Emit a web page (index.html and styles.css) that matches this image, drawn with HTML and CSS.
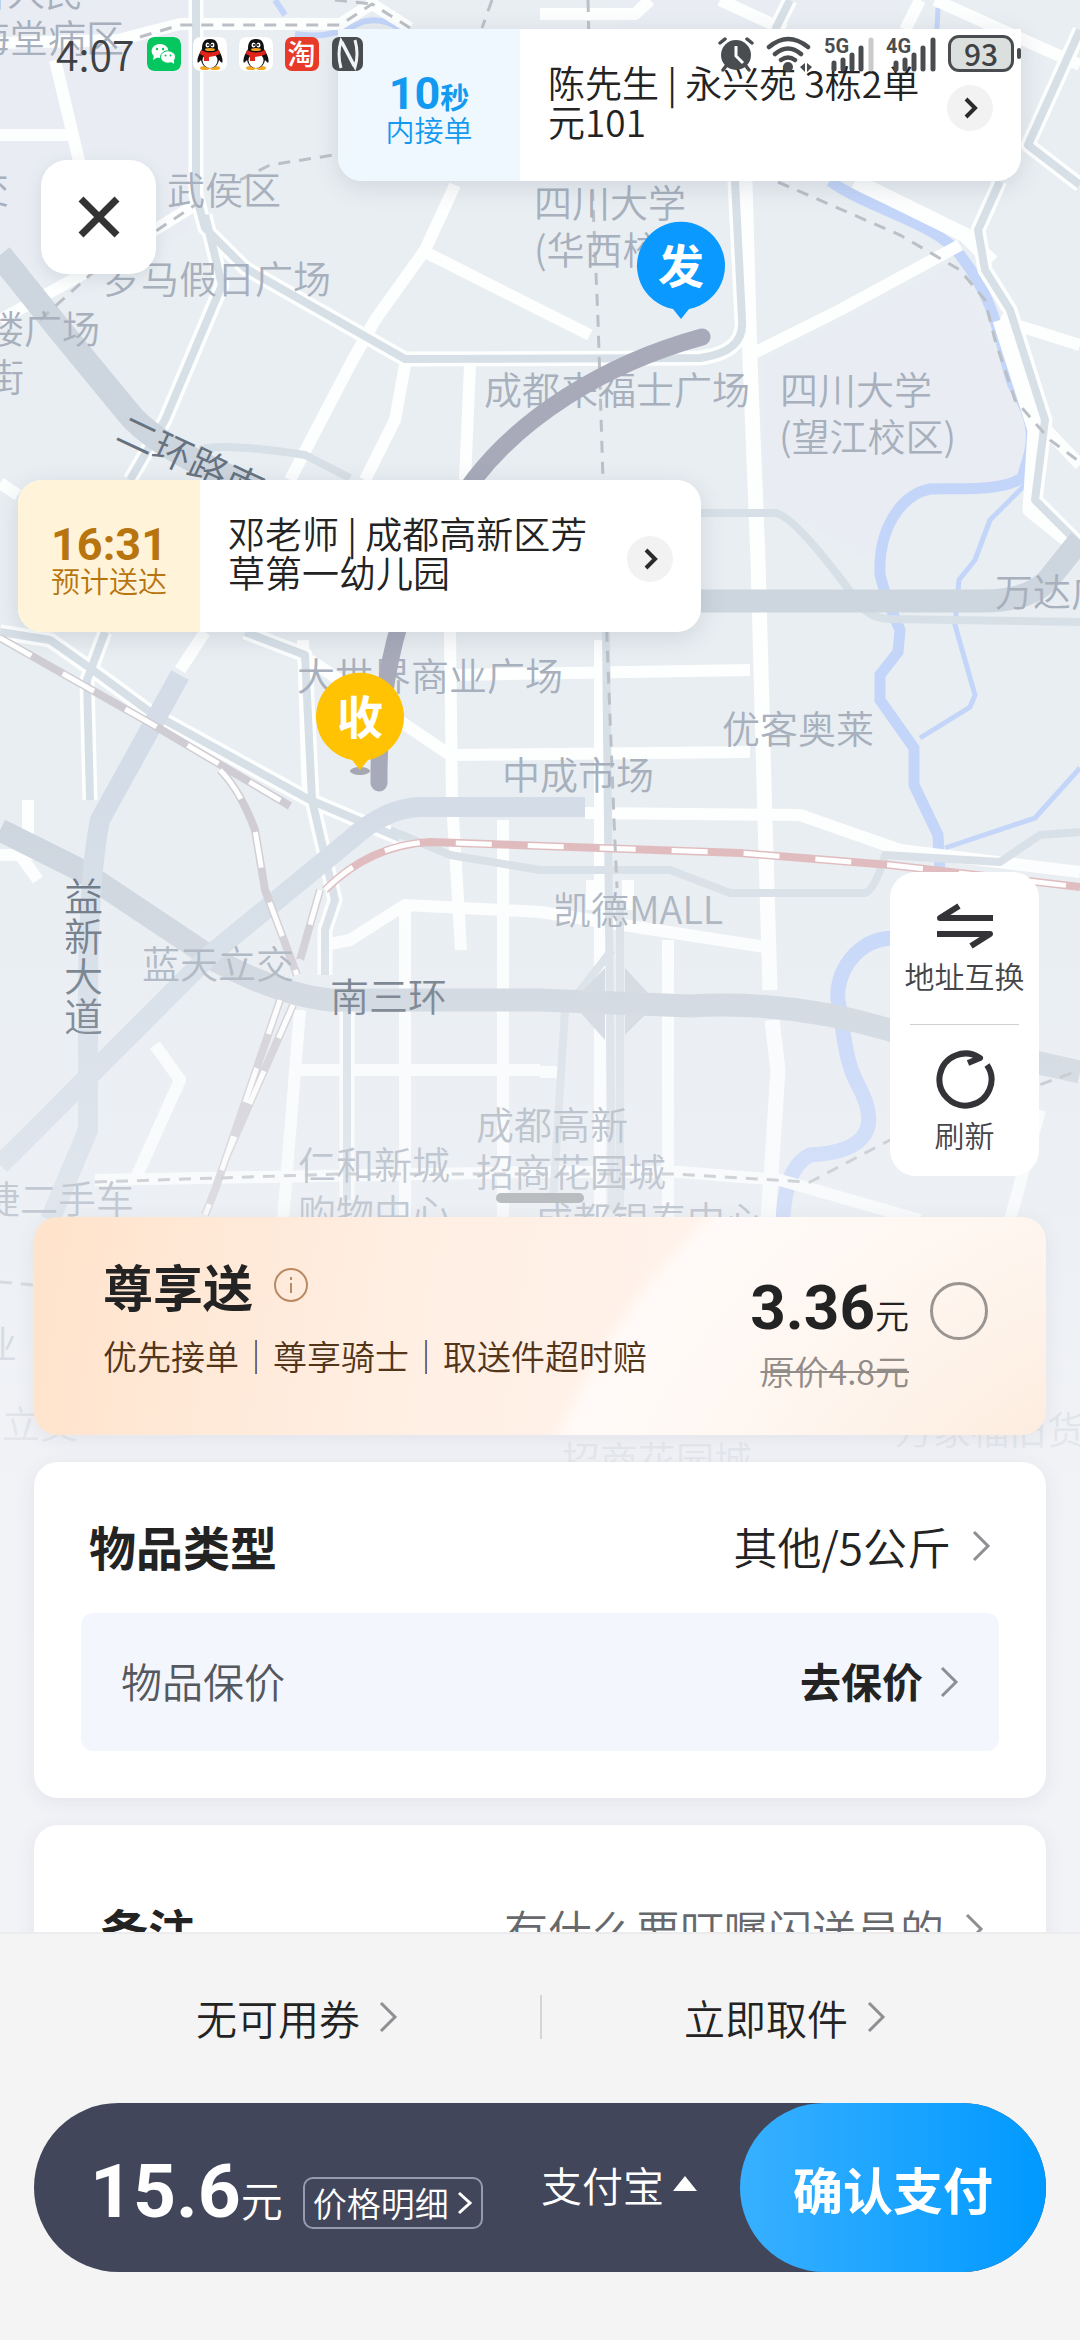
FILE: index.html
```html
<!DOCTYPE html>
<html lang="zh-CN">
<head>
  <meta charset="UTF-8">
  <meta name="viewport" content="width=device-width, initial-scale=1.0">
  <title>确认订单</title>
  <link rel="stylesheet" href="styles.css">
</head>
<body>
  <main class="screen">
    <svg class="map" viewBox="0 0 1080 1640" aria-hidden="true">
      <defs>
        <linearGradient id="fade" x1="0" y1="0" x2="0" y2="1">
          <stop offset="0" stop-color="#f2f3f7" stop-opacity="0"/>
          <stop offset="0.5" stop-color="#f2f3f7" stop-opacity="0.4"/>
          <stop offset="0.75" stop-color="#f2f3f7" stop-opacity="0.8"/>
          <stop offset="1" stop-color="#f2f3f7"/>
        </linearGradient>
      </defs>
      <rect width="1080" height="1640" fill="#e9eef2"/>
      <path fill="#e8ebf6" d="M763 360L960 260L1030 440L1015 480L900 500L870 560L765 500ZM0 0H190V230L80 300L0 250ZM620 0H900V30H620Z" opacity=".4"/>

      <!-- rivers -->
      <g class="river">
        <path d="M275 0L285 15M295 34Q330 40 362 22Q382 16 402 30" stroke-width="6"/>
        <path d="M830 181C870 210 935 222 960 255C1000 305 1000 350 1013 385C1040 430 1032 445 1022 478C1000 492 960 488 930 489C900 495 878 530 880 575L887 600L900 630L898 652L880 675V700L914 748V785L938 835L940 872" stroke-width="11"/>
        <path d="M1025 485L990 520L975 560L959 580L955 625L975 695L970 707L920 738M938 8L937 29M1080 768L1035 818L945 848" stroke-width="5"/>
        <path d="M895 938C855 938 835 975 838 1000C845 1040 845 1060 858 1085C880 1125 870 1152 810 1155C790 1165 784 1190 782 1230" stroke-width="15"/>
      </g>

      <!-- side roads -->
      <g class="road">
        <path d="M0 43L118 40L180 24H340L372 4L410 28M55 60L80 165M0 135H70M0 320L90 270L195 205M540 14H635L650 0M720 0L785 30M920 0L905 30"/>
        <path d="M455 185L425 250L375 320L350 365L290 480M425 252L540 310L590 335M405 365L395 420L365 480M470 365L465 480M0 483L18 495M205 632L180 670"/>
        <path d="M935 0L1080 65M960 245L840 310L750 355M1000 320L1080 345M1047 430L1080 465M303 640L308 800M310 660L450 755L750 752M450 675L750 670M450 632L452 800L461 950"/>
        <path d="M28 800V860M0 855H20L38 880M585 813L800 815L900 850L1080 872M325 945L350 940L405 905L540 912L765 947M405 905V1220M503 820V1220M300 1070H540M300 1010L283 1220M155 1045L180 1080L135 1180M668 940V1220M592 880V910M628 880V910"/>
        <path d="M95 1180L540 1172L680 1172L780 1180L920 1220M1040 1110L1010 1220M540 1072H560M600 640V1220"/>
      </g>
      <path class="road wide" d="M745 181L750 360L758 560L765 820L770 990"/>
      <path class="road wide" d="M855 181L965 235L992 262M1000 320L1035 430L1030 510L1080 550M772 1020L778 1070L768 1220"/>

      <!-- main roads -->
      <g class="casing">
        <path d="M196 0V195L205 228L245 268L405 359L700 358Q745 352 742 320L735 181M1080 30L1028 145L1080 185M790 0L775 30M1000 181L978 230L985 270L1010 310L1045 420L1035 500L1080 545M205 215L222 285L165 420L130 480"/>
        <path d="M0 632L50 640L90 668L150 712L310 800L400 838M105 632L87 680L90 800M245 632L305 655L312 800L335 900L325 930V975M347 1000V1200"/>
      </g>
      <g class="main">
        <path d="M196 0V195L205 228L245 268L405 359L700 358Q745 352 742 320L735 181M1080 30L1028 145L1080 185M790 0L775 30M1000 181L978 230L985 270L1010 310L1045 420L1035 500L1080 545M205 215L222 285L165 420L130 480"/>
        <path d="M200 450Q220 442 305 455L350 478M0 632L50 640L90 668L150 712L310 800L400 838M105 632L87 680L90 800M245 632L305 655L312 800L335 900L325 930V975M347 1000V1200"/>
        <path d="M700 513H775Q795 515 860 605Q870 618 890 619L1080 622M390 830L450 855L540 870H670L730 893H865Q875 890 885 855L1000 862L1040 835L1080 832M606 632L612 1210M620 900V1210M612 950L565 1010L553 1200"/>
      </g>

      <!-- ring roads -->
      <g class="ring">
        <path d="M0 255L60 330L130 415Q160 450 260 490" stroke-width="25"/>
        <path d="M700 601H985Q1030 600 1048 580L1080 540M0 830L80 870L215 960Q280 995 330 1000H540L690 1006Q790 1000 890 1030L1080 1072" stroke-width="23"/>
        <path class="light" d="M180 675L100 820Q88 880 88 1000V1130L50 1220M585 807H420Q385 808 350 840L210 955L0 1165" stroke-width="20"/>
      </g>
      <path d="M625 968L648 993H625ZM605 968L580 993H605ZM580 1012L605 1040V1012ZM625 1012H648L625 1035Z" fill="#d0d7e0"/>

      <!-- railways -->
      <g class="rail">
        <path d="M0 638L150 723L290 806M220 770Q240 790 255 830L265 890L297 975M320 890L300 960M280 1000L215 1190L205 1215M293 1005L225 1160"/>
        <path class="red" d="M325 890Q370 845 430 842L740 853L890 865L1080 887"/>
      </g>
      <g class="rail-gap">
        <path d="M0 638L150 723L290 806M220 770Q240 790 255 830L265 890L297 975M320 890L300 960M280 1000L215 1190L205 1215M293 1005L225 1160M325 890Q370 845 430 842L740 853L890 865L1080 887"/>
      </g>
      <path class="metro" d="M140 37L180 25H340L372 4L410 28M335 0L372 4M492 0L482 28M588 0L592 180L598 320L603 480L607 640L614 820L617 888M240 180L270 165L340 154M40 320L90 275L195 205M778 182L900 235L960 270L985 300L995 340L1015 400L1050 440L1080 462M95 1182L340 1174L675 1174L810 1182L890 1140L1080 1070M0 1282L34 1285"/>

      <!-- place names -->
      <g class="place">
        <text x="-31" y="6">省人民</text>
        <text x="-28" y="52">海堂病区</text>
        <text x="167" y="204">武侯区</text>
        <text x="-29" y="203">交</text>
        <text x="103" y="293">罗马假日广场</text>
        <text x="-14" y="343">楼广场</text>
        <text x="-14" y="391">街</text>
        <text x="534" y="217">四川大学</text>
        <text x="534" y="264">(华西校区)</text>
        <text x="484" y="404">成都来福士广场</text>
        <text x="780" y="404">四川大学</text>
        <text x="779" y="451">(望江校区)</text>
        <text x="995" y="606">万达广场</text>
        <text x="722" y="743">优客奥莱</text>
        <text x="297" y="690">大世界商业广场</text>
        <text x="502" y="789">中成市场</text>
        <text x="553" y="924">凯德MALL</text>
        <text x="142" y="978">蓝天立交</text>
        <text x="298" y="1179">仁和新城</text>
        <text x="298" y="1227">购物中心</text>
        <text x="476" y="1139">成都高新</text>
        <text x="476" y="1186">招商花园城</text>
        <text x="535" y="1234">成都银泰中心</text>
        <text x="-18" y="1213">捷二手车</text>
        <text x="-21" y="1358">业</text>
        <text x="-36" y="1438">家立交</text>
        <text x="562" y="1474">招商花园城</text>
        <text x="895" y="1444">万家福旧货</text>
      </g>
      <g class="place street">
        <text x="114" y="440" transform="rotate(25 114 440)">二环路南</text>
        <text x="64" y="911">益</text>
        <text x="64" y="951">新</text>
        <text x="64" y="991">大</text>
        <text x="64" y="1031">道</text>
        <text x="330" y="1011">南三环</text>
      </g>
      <rect y="800" width="1080" height="840" fill="url(#fade)"/>

      <!-- route and pins -->
      <path class="route" d="M702 337C600 365 520 420 475 478C420 550 378 640 379 783"/>
      <path fill="#0a99ff" d="M681 319L673 309A44 44 0 1 1 689 309Z"/>
      <text class="pin" x="681" y="283">发</text>
      <ellipse cx="360" cy="771" rx="10" ry="4" fill="#a5a8b0"/>
      <path fill="#ffc303" d="M360 770L352 760A44 44 0 1 1 368 760Z"/>
      <text class="pin" x="360" y="734">收</text>
    </svg>

    <section class="map-area">
      <a class="address from" href="#from">
        <span class="eta"><span><b class="num">10</b><b>秒</b></span><span>内接单</span></span>
        <span class="where">陈先生 | 永兴苑 3栋2单元101</span>
        <span class="go"><svg width="18" height="24" viewBox="0 0 18 24"><path d="M5 3L14 12L5 21"/></svg></span>
      </a>
      <a class="address to" href="#to">
        <span class="eta"><span><b class="num">16:31</b></span><span>预计送达</span></span>
        <span class="where">邓老师 | 成都高新区芳草第一幼儿园</span>
        <span class="go"><svg width="18" height="24" viewBox="0 0 18 24"><path d="M5 3L14 12L5 21"/></svg></span>
      </a>

      <button class="close" type="button" aria-label="关闭">
        <svg width="44" height="44" viewBox="0 0 44 44"><path d="M4 4L40 40M40 4L4 40"/></svg>
      </button>

      <div class="tools">
        <button type="button">
          <svg width="60" height="48" viewBox="0 0 60 48"><path d="M58 16H5L24 4M2 32H55L36 44"/></svg>
          <span>地址互换</span>
        </button>
        <button type="button">
          <svg width="60" height="60" viewBox="0 0 60 60"><path d="M52 16A26 26 0 1 1 45 9L33 14"/></svg>
          <span>刷新</span>
        </button>
      </div>

      <header class="status">
        <span class="clock">4:07</span>
        <svg class="app" viewBox="0 0 34 34"><rect width="34" height="34" rx="7" fill="#06c65f"/><ellipse cx="13" cy="14" rx="8.500" ry="7" fill="#fff"/><path d="M7 18L6 23L11 20Z" fill="#fff"/><ellipse cx="21" cy="20" rx="7.500" ry="6.200" fill="#fff" stroke="#06c65f"/><path d="M24 25L27 27L27 23Z" fill="#fff"/><g fill="#06c65f"><circle cx="10" cy="12" r="1.200"/><circle cx="16" cy="12" r="1.200"/><circle cx="18.500" cy="18.500" r="1"/><circle cx="23.500" cy="18.500" r="1"/></g></svg>
        <svg class="app" viewBox="0 0 34 34"><g id="qq"><rect width="34" height="34" rx="7" fill="#fff"/><ellipse cx="12" cy="31" rx="5" ry="2" fill="#f5a623"/><ellipse cx="22" cy="31" rx="5" ry="2" fill="#f5a623"/><path fill="#111" d="M17 2C10 2 9 7 9 12C6 17 4 21 4.500 25C5 27 7 24 8 23C9 28 12 31 17 31S25 28 26 23C27 24 29 27 29.500 25C30 21 28 17 25 12C25 7 24 2 17 2Z"/><ellipse cx="17" cy="23.500" rx="7.500" ry="7.500" fill="#fff"/><path fill="#e2231a" d="M8 13Q17 18 26 13L27 17Q21 20 16 20V24H11V19L7 17Z"/><ellipse cx="14.500" cy="8" rx="2" ry="2.500" fill="#fff"/><ellipse cx="19.500" cy="8" rx="2" ry="2.500" fill="#fff"/><circle cx="15" cy="8" r="1"/><circle cx="19" cy="8" r="1"/><ellipse cx="17" cy="12.500" rx="5" ry="1.500" fill="#f5a623"/></g></svg>
        <svg class="app" viewBox="0 0 34 34"><use href="#qq"/></svg>
        <span class="app taobao">淘</span>
        <svg class="app" viewBox="0 0 34 34"><rect x="1" width="31" height="34" rx="7" fill="#4a4d50"/><path fill="none" stroke="#eff4f8" stroke-width="3" d="M10 31Q6 17 10 4L23 29M24 3Q28 17 24 30L11 5"/></svg>
        <span class="spacer"></span>
        <svg width="36" height="36" viewBox="0 0 36 36"><circle cx="18" cy="19" r="15" fill="#4a4d50"/><path fill="none" stroke="#4a4d50" stroke-width="3.500" stroke-linecap="round" d="M2 7L7 3M34 7L29 3M8 30L5 34M28 30L31 34"/><path fill="none" stroke="#fff" stroke-width="3" d="M18 10V20L25 27"/></svg>
        <svg width="46" height="36" viewBox="0 0 46 36"><g fill="none" stroke="#4a4d50" stroke-width="4.500" stroke-linecap="round"><path d="M3 11Q22 -5 42 11M9 18Q22 7 35 18M15 24Q22 19 29 24"/></g><circle cx="22" cy="31" r="5" fill="#4a4d50"/><path fill="#4a4d50" d="M39 27V36L34 31ZM41 27V36L46 31Z"/></svg>
        <svg class="signal" width="50" height="36" viewBox="0 0 50 36"><text x="0" y="17">5G</text><path d="M10 27V33M19 24V33M28 19V33M37 12V33"/><path class="off" d="M47 4V33"/></svg>
        <svg class="signal" width="50" height="36" viewBox="0 0 50 36"><text x="0" y="17">4G</text><path d="M10 27V33M19 24V33M28 19V33M37 12V33M47 4V33"/></svg>
        <span class="battery">93</span>
      </header>
    </section>

    <div class="handle"></div>

    <section class="sheet">
      <div class="card premium">
        <div class="premium-info">
          <h2>尊享送
            <button class="info" type="button" aria-label="说明"><svg width="36" height="36" viewBox="0 0 36 36"><circle cx="18" cy="18" r="16"/><path d="M18 16V26M18 10V13"/></svg></button>
          </h2>
          <p>优先接单｜尊享骑士｜取送件超时赔</p>
        </div>
        <div class="premium-price">
          <div><b class="num">3.36</b><span>元</span></div>
          <del>原价4.8元</del>
        </div>
        <input class="pick" type="radio" name="service" aria-label="尊享送">
      </div>

      <div class="card item">
        <a class="row" href="#type">
          <h3>物品类型</h3>
          <span class="value">其他/5公斤</span>
          <svg class="chev" viewBox="0 0 20 32"><path d="M3 2L17 16L3 30"/></svg>
        </a>
        <a class="insure" href="#insure">
          <span class="name">物品保价</span>
          <b>去保价</b>
          <svg class="chev" viewBox="0 0 20 32"><path d="M3 2L17 16L3 30"/></svg>
        </a>
      </div>

      <div class="card remark">
        <a class="row" href="#remark">
          <h3>备注</h3>
          <span class="value">有什么要叮嘱闪送员的</span>
          <svg class="chev" viewBox="0 0 20 32"><path d="M3 2L17 16L3 30"/></svg>
        </a>
      </div>
    </section>
  </main>

  <footer class="bottom">
    <div class="options">
      <a href="#coupon">无可用券<svg class="chev" viewBox="0 0 20 32"><path d="M3 2L17 16L3 30"/></svg></a>
      <a href="#time">立即取件<svg class="chev" viewBox="0 0 20 32"><path d="M3 2L17 16L3 30"/></svg></a>
    </div>
    <div class="pay">
      <div class="total"><b class="num">15.6</b><span>元</span></div>
      <button class="detail" type="button">价格明细<svg width="16" height="26" viewBox="0 0 16 26"><path d="M2 3L13 13L2 23"/></svg></button>
      <div class="method">
        <select aria-label="支付方式"><option>支付宝</option></select>
        <svg width="26" height="16" viewBox="0 0 26 16"><path d="M13 0L25 15H1Z"/></svg>
      </div>
      <button class="confirm" type="button">确认支付</button>
    </div>
  </footer>
</body>
</html>
```
FILE: styles.css
```css
* {
  box-sizing: border-box;
}

body {
  margin: 0;
  height: 100vh;
  display: flex;
  flex-direction: column;
  overflow: hidden;
  background: #f2f3f7;
  color: #232323;
  font-family: "Noto Sans CJK SC", sans-serif;
  font-weight: 350;
}

a {
  color: inherit;
  text-decoration: none;
}

button,
select {
  margin: 0;
  padding: 0;
  border: 0;
  background: none;
  color: inherit;
  font-family: inherit;
  font-weight: inherit;
}

h2,
h3,
p {
  margin: 0;
}

svg {
  flex: none;
}

.num {
  font-family: Roboto, "Noto Sans CJK SC", sans-serif;
}

.screen {
  position: relative;
  flex: 1;
  min-height: 0;
  overflow: hidden;
}

/* map drawing */
.map {
  position: absolute;
  top: 0;
  left: 0;
  width: 100%;
}

.river path {
  fill: none;
  stroke: #c3d5f9;
}

.road,
.road path,
.casing path,
.main path {
  fill: none;
  stroke: #fdfefe;
  stroke-width: 12;
  stroke-linejoin: round;
}

.road.wide {
  stroke-width: 15;
}

.casing path {
  stroke-width: 15;
}

.main path {
  stroke: #d8e0e7;
  stroke-width: 8;
}

.ring path {
  fill: none;
  stroke: #cdd5de;
}

.ring .light {
  stroke: #d4dde7;
}

.rail path {
  fill: none;
  stroke: #cfcdd3;
  stroke-width: 8;
}

.rail .red {
  stroke: #dfb9bc;
}

.rail-gap path {
  fill: none;
  stroke: #fff;
  stroke-width: 5;
  stroke-dasharray: 36 36;
}

.metro {
  fill: none;
  stroke: #bcc0c6;
  stroke-width: 3;
  stroke-dasharray: 12 9;
}

.place {
  font-size: 38px;
  font-weight: 350;
  fill: #a7b0bc;
}

.place.street {
  font-size: 39px;
  fill: #66727f;
}

.route {
  fill: none;
  stroke: #a8aaba;
  stroke-width: 17;
  stroke-linecap: round;
}

.pin {
  font-size: 46px;
  font-weight: 700;
  fill: #fff;
  text-anchor: middle;
}

.map-area {
  position: relative;
  height: 52vh;
}

/* status bar */
.status {
  position: absolute;
  top: 35px;
  left: 56px;
  right: 60px;
  display: flex;
  align-items: center;
  gap: 12px;
  height: 37px;
  color: #3f4245;
}

.clock {
  font-size: 41px;
  line-height: 37px;
}

.app {
  width: 34px;
  height: 34px;
  border-radius: 7px;
}

.taobao {
  background: #e83a28;
  color: #fff;
  font-size: 28px;
  font-weight: 500;
  line-height: 33px;
  text-align: center;
}

.spacer {
  flex: 1;
}

.signal path {
  stroke: #4a4d50;
  stroke-width: 5;
  stroke-linecap: round;
}

.signal .off {
  stroke: #c9cacc;
}

.signal text {
  font-family: Roboto, sans-serif;
  font-size: 20px;
  font-weight: 700;
  fill: #4a4d50;
}

.battery {
  position: relative;
  width: 66px;
  height: 37px;
  margin-right: 6px;
  border: 3px solid #4a4d50;
  border-radius: 11px;
  background: #dbe0df;
  font-size: 30px;
  font-weight: 500;
  line-height: 30px;
  text-align: center;
}

.battery::after {
  content: "";
  position: absolute;
  top: 10px;
  right: -10px;
  width: 4px;
  height: 11px;
  border-radius: 2px;
  background: #4a4d50;
}

/* address bubbles */
.address {
  position: absolute;
  display: flex;
  align-items: center;
  width: 683px;
  height: 152px;
  padding-right: 28px;
  border-radius: 24px;
  overflow: hidden;
  background: #fff;
  box-shadow: 0 6px 24px rgba(60, 80, 100, 0.15);
}

.address.from {
  top: 29px;
  right: 59px;
  border-radius: 0 0 24px 24px;
}

.address.to {
  top: 480px;
  left: 18px;
}

.eta {
  flex: none;
  display: flex;
  flex-direction: column;
  align-items: center;
  justify-content: center;
  width: 182px;
  height: 100%;
  padding-top: 12px;
  font-size: 29px;
  line-height: 33px;
}

.eta .num {
  font-size: 45px;
}

.from .eta {
  background: #f0f8ff;
  color: #129af0;
}

.to .eta {
  background: #fff4da;
  color: #b8740e;
}

.where {
  flex: 1;
  padding: 0 20px 6px 28px;
  font-size: 37px;
  line-height: 39px;
}

.go {
  display: flex;
  align-items: center;
  justify-content: center;
  width: 46px;
  height: 46px;
  margin-top: 6px;
  border-radius: 23px;
  background: #f2f2f3;
}

.go path {
  fill: none;
  stroke: #2b2b2e;
  stroke-width: 4;
}

.close {
  position: absolute;
  top: 160px;
  left: 41px;
  display: flex;
  align-items: center;
  justify-content: center;
  width: 115px;
  height: 114px;
  border-radius: 26px;
  background: #fff;
  box-shadow: 0 4px 16px rgba(60, 80, 100, 0.12);
}

.close path {
  stroke: #333;
  stroke-width: 7;
}

.tools {
  position: absolute;
  top: 872px;
  right: 41px;
  width: 149px;
  padding: 0 20px;
  border-radius: 26px;
  background: #fff;
}

.tools button {
  display: flex;
  flex-direction: column;
  align-items: center;
  justify-content: center;
  gap: 6px;
  width: 100%;
  height: 152px;
  color: #45454a;
  font-size: 30px;
  line-height: 38px;
  white-space: nowrap;
}

.tools button + button {
  border-top: 1px solid #cfcfd2;
}

.tools path {
  fill: none;
  stroke: #333338;
  stroke-width: 6;
  stroke-linejoin: round;
}

.handle {
  position: absolute;
  top: 51vh;
  left: 50%;
  width: 88px;
  height: 10px;
  margin-left: -44px;
  border-radius: 5px;
  background: #b9bdbf;
}

/* sheet */
.sheet {
  position: relative;
  display: flex;
  flex-direction: column;
  gap: 27px;
  padding: 0 34px;
}

.card {
  border-radius: 24px;
  background: #fff;
  box-shadow: 0 4px 20px rgba(60, 70, 90, 0.08);
}

.chev {
  width: 20px;
  height: 32px;
}

.chev path {
  fill: none;
  stroke: #8f8f93;
  stroke-width: 3;
}

.premium {
  display: flex;
  align-items: center;
  height: 218px;
  padding: 0 58px 0 69px;
  background: radial-gradient(circle at 118% 520px, #fdebdc 320px, #fef4ec 500px, #fffaf7 690px, #fffaf7 725px, rgba(255, 250, 247, 0) 745px), linear-gradient(100deg, #ffe3cb, #ffeee2 35%, #fff2ea 60%);
}

.premium-info {
  flex: 1;
  padding-bottom: 12px;
}

.premium h2 {
  display: flex;
  align-items: center;
  gap: 20px;
  font-size: 50px;
  line-height: 72px;
}

.premium p {
  color: #53351a;
  font-size: 34px;
  line-height: 70px;
}

.info {
  display: flex;
}

.info svg {
  fill: none;
  stroke: #b98a63;
  stroke-width: 2;
}

.premium-price {
  padding-top: 24px;
  text-align: right;
  font-size: 34px;
}

.premium-price div {
  line-height: 60px;
}

.premium-price .num {
  font-size: 62px;
  line-height: 60px;
}

.premium del {
  display: block;
  color: #918c88;
  line-height: 52px;
  text-decoration-thickness: 2px;
}

.pick {
  appearance: none;
  flex: none;
  width: 58px;
  height: 58px;
  margin: 0 0 30px 21px;
  border: 3px solid #9b9592;
  border-radius: 50%;
}

.item {
  padding: 52px 47px 47px;
}

.row {
  display: flex;
  align-items: center;
  gap: 20px;
  line-height: 64px;
}

.row h3 {
  flex: 1;
  font-size: 47px;
}

.row .value {
  font-size: 44px;
}

.item .row {
  padding: 0 8px;
}

.insure {
  display: flex;
  align-items: center;
  gap: 16px;
  height: 138px;
  margin-top: 35px;
  padding: 0 40px;
  border-radius: 12px;
  background: #f3f6fc;
  font-size: 41px;
  line-height: 64px;
}

.insure .name {
  flex: 1;
  color: #55585e;
}

.insure .name,
.insure b {
  padding-bottom: 4px;
}

.remark {
  padding: 72px 62px 76px 67px;
}

.remark .value {
  color: #66686c;
}

/* bottom bar */
.bottom {
  flex: none;
  padding: 33px 34px 68px;
  border-top: 2px solid #ececee;
  background: #f4f4f5;
}

.options {
  display: flex;
  margin-bottom: 36px;
}

.options a {
  flex: 1;
  display: flex;
  align-items: center;
  justify-content: center;
  gap: 18px;
  height: 44px;
  margin: 28px 0;
  padding-left: 20px;
  font-size: 41px;
  line-height: 38px;
}

.options a + a {
  padding: 0 18px 0 0;
  border-left: 2px solid #d5d5d8;
}

.pay {
  display: flex;
  align-items: center;
  height: 169px;
  padding-left: 56px;
  border-radius: 85px;
  background: #42465a;
  color: #fff;
}

.total {
  padding-top: 14px;
  font-size: 42px;
  line-height: 84px;
}

.total .num {
  font-size: 75px;
}

.detail {
  display: flex;
  align-items: center;
  gap: 8px;
  height: 52px;
  margin: 30px 0 0 20px;
  padding: 0 8px;
  border: 2px solid #969bb0;
  border-radius: 10px;
  font-size: 34px;
  line-height: 48px;
}

.detail path {
  fill: none;
  stroke: #fff;
  stroke-width: 3;
}

.method {
  flex: 1;
  display: flex;
  align-items: center;
  justify-content: center;
  gap: 8px;
  padding: 0 0 8px 16px;
}

.method select {
  appearance: none;
  font-size: 41px;
  line-height: 60px;
}

.method path {
  fill: #fff;
}

.confirm {
  width: 306px;
  height: 100%;
  border-radius: 85px;
  background: linear-gradient(90deg, #38b0ff, #0099ff);
  font-size: 50px;
  font-weight: 700;
}
```
